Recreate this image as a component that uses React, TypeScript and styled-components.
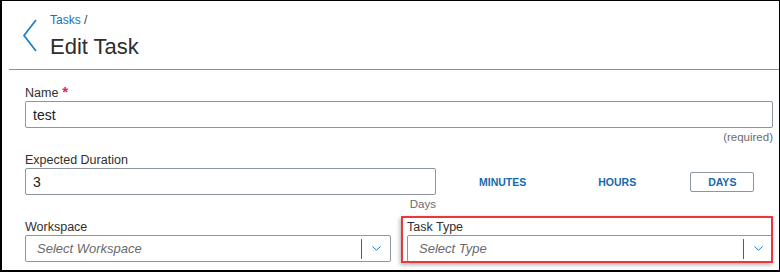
import React from 'react';
import styled, { createGlobalStyle } from 'styled-components';

const GlobalStyle = createGlobalStyle`
  body {
    margin: 0;
    background: #fff;
    font-family: 'Liberation Sans', Arial, sans-serif;
  }
`;

const Frame = styled.div`
  width: 780px;
  height: 272px;
  box-sizing: border-box;
  border-style: solid;
  border-color: #000;
  border-width: 1px 1px 2px 2px;
  overflow: hidden;
  background: #fff;
`;

const Header = styled.header`
  display: flex;
  align-items: flex-start;
  padding: 11px 0 0 20px;
  height: 57px;
`;

const BackBtn = styled.button`
  width: 16px;
  height: 34px;
  margin-top: 7px;
  padding: 0;
  border: none;
  background: none;
  cursor: pointer;
  svg {
    display: block;
  }
`;

const Titles = styled.div`
  display: flex;
  flex-direction: column;
  margin-left: 12px;
`;

const Crumb = styled.a`
  font-size: 12px;
  line-height: 16px;
  color: #1a6fb4;
  text-decoration: none;
  span {
    color: #3a3a3a;
  }
`;

const Title = styled.h1`
  margin: 5px 0 0;
  font-size: 22px;
  line-height: 28px;
  font-weight: 400;
  color: #2e2e2e;
`;

const Divider = styled.hr`
  margin: 0 0 0 7px;
  border: none;
  border-top: 1px solid #8f8f8f;
`;

const Form = styled.form`
  display: flex;
  flex-direction: column;
  padding: 15px 6px 0 23px;
`;

const Field = styled.div<{ $gap?: number }>`
  display: flex;
  flex-direction: column;
  margin-top: ${(p) => p.$gap ?? 0}px;
`;

const Label = styled.label`
  font-size: 12.5px;
  line-height: 16px;
  color: #2f2f2f;
`;

const Star = styled.span`
  color: #e0245e;
  margin-left: 4px;
  font-size: 15px;
  font-weight: 700;
  line-height: 0;
`;

const TextInput = styled.input`
  box-sizing: border-box;
  height: 27px;
  width: 100%;
  border: 1px solid #8c96a3;
  border-radius: 2px;
  padding: 0 7px;
  font-family: inherit;
  font-size: 14px;
  color: #222;
  outline: none;
`;

const Hint = styled.div`
  align-self: flex-end;
  font-size: 11.5px;
  line-height: 14px;
  margin-top: 2px;
  color: #6b6b6b;
`;

const DurationRow = styled.div`
  display: flex;
  align-items: flex-start;
`;

const DurationField = styled.div`
  display: flex;
  flex-direction: column;
  width: 411px;
`;

const Units = styled.div`
  display: flex;
  align-items: center;
  gap: 36px;
  height: 27px;
  margin-left: 25px;
`;

const UnitBtn = styled.button<{ $active?: boolean }>`
  box-sizing: border-box;
  height: 20px;
  padding: 0 17px;
  border: 1px solid ${(p) => (p.$active ? '#8c96a3' : 'transparent')};
  border-radius: 2px;
  background: #fff;
  font-family: inherit;
  font-size: 10.5px;
  font-weight: 700;
  color: #1769aa;
  cursor: pointer;
`;

const SelectRow = styled.div`
  display: grid;
  grid-template-columns: 366px 1fr;
  column-gap: 16px;
  margin-top: 8px;
`;

const Highlight = styled.div`
  position: relative;
  display: flex;
  flex-direction: column;
  &::after {
    content: '';
    position: absolute;
    inset: -3px 0 -1px -6px;
    border: 2px solid #e8383d;
    box-shadow: -1px 2px 4px rgba(0, 0, 0, 0.3);
    pointer-events: none;
  }
`;

const Select = styled.div`
  box-sizing: border-box;
  display: flex;
  align-items: center;
  height: 27px;
  border: 1px solid #8c96a3;
  border-radius: 2px;
`;

const Placeholder = styled.span`
  flex: 1;
  padding-left: 11px;
  font-size: 13px;
  font-style: italic;
  color: #6a6a6a;
`;

const Sep = styled.span`
  width: 1px;
  height: 20px;
  background: #5a5a5a;
`;

const Caret = styled.span`
  display: flex;
  justify-content: center;
  width: 28px;
  svg {
    display: block;
  }
`;

function SelectBox({ placeholder }: { placeholder: string }) {
  return (
    <Select>
      <Placeholder>{placeholder}</Placeholder>
      <Sep />
      <Caret>
        <svg width="9" height="5" viewBox="0 0 9 5">
          <polyline points="0.5,0.5 4.5,4.2 8.5,0.5" fill="none" stroke="#1a7ec2" strokeWidth="1" />
        </svg>
      </Caret>
    </Select>
  );
}

export default function App() {
  return (
    <Frame>
      <GlobalStyle />
      <Header>
        <BackBtn aria-label="Back">
          <svg width="16" height="34" viewBox="0 0 16 34">
            <polyline points="14,1 2,16.5 14,32" fill="none" stroke="#1a7ec2" strokeWidth="1.7" />
          </svg>
        </BackBtn>
        <Titles>
          <Crumb href="#">
            Tasks <span>/</span>
          </Crumb>
          <Title>Edit Task</Title>
        </Titles>
      </Header>
      <Divider />
      <Form>
        <Field>
          <Label>
            Name<Star>*</Star>
          </Label>
          <TextInput defaultValue="test" />
          <Hint>(required)</Hint>
        </Field>
        <Field $gap={8}>
          <Label>Expected Duration</Label>
          <DurationRow>
            <DurationField>
              <TextInput defaultValue="3" />
              <Hint>Days</Hint>
            </DurationField>
            <Units>
              <UnitBtn type="button">MINUTES</UnitBtn>
              <UnitBtn type="button">HOURS</UnitBtn>
              <UnitBtn type="button" $active>
                DAYS
              </UnitBtn>
            </Units>
          </DurationRow>
        </Field>
        <SelectRow>
          <Field>
            <Label>Workspace</Label>
            <SelectBox placeholder="Select Workspace" />
          </Field>
          <Highlight>
            <Label>Task Type</Label>
            <SelectBox placeholder="Select Type" />
          </Highlight>
        </SelectRow>
      </Form>
    </Frame>
  );
}
